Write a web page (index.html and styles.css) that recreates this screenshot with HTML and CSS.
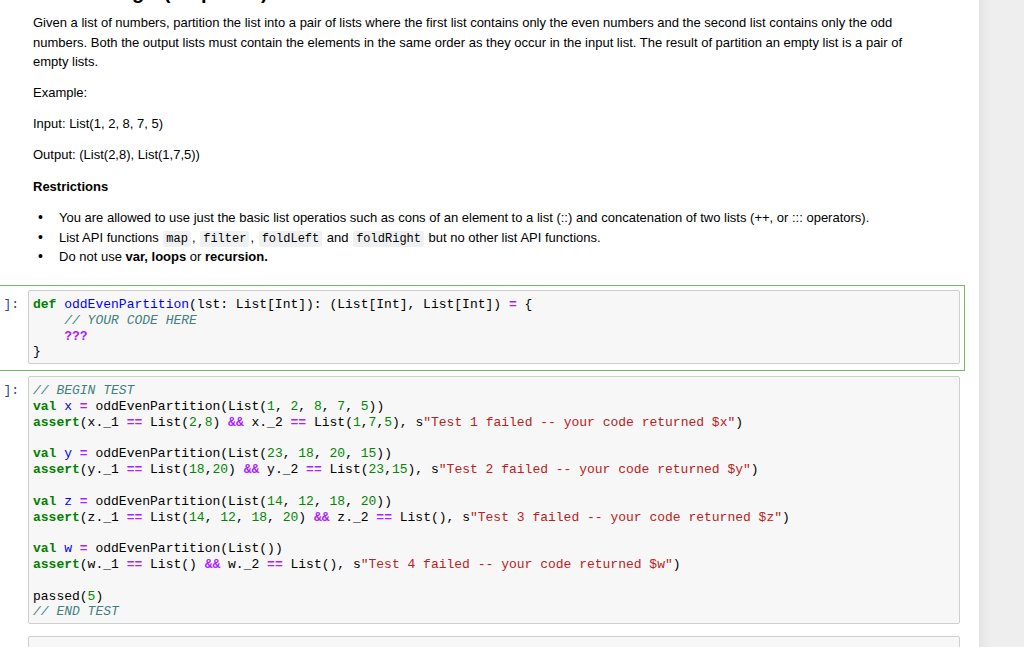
FILE: index.html
```html
<!DOCTYPE html>
<html>
<head>
<meta charset="utf-8">
<link rel="stylesheet" href="styles.css">
</head>
<body>
<div class="notebook">
  <h2 class="title">Partitioning (5 points)</h2>
  <div class="md">
    <p>Given a list of numbers, partition the list into a pair of lists where the first list contains only the even numbers and the second list contains only the odd numbers. Both the output lists must contain the elements in the same order as they occur in the input list. The result of partition an empty list is a pair of empty lists.</p>
    <p>Example:</p>
    <p>Input: List(1, 2, 8, 7, 5)</p>
    <p>Output: (List(2,8), List(1,7,5))</p>
    <p class="sub"><strong>Restrictions</strong></p>
    <ul>
      <li>You are allowed to use just the basic list operatios such as cons of an element to a list (::) and concatenation of two lists (++, or ::: operators).</li>
      <li>List API functions <code>map</code>, <code>filter</code>, <code>foldLeft</code> and <code>foldRight</code> but no other list API functions.</li>
      <li>Do not use <strong>var, loops</strong> or <strong>recursion.</strong></li>
    </ul>
  </div>
  <div class="cell selected">
    <div class="prompt">]:</div>
    <div class="input"><pre><span class="kw">def</span> <span class="df">oddEvenPartition</span>(lst: List[Int]): (List[Int], List[Int]) <span class="op">=</span> {
    <span class="cm">// YOUR CODE HERE</span>
    <span class="op">???</span>
}</pre></div>
  </div>
  <div class="cell">
    <div class="prompt">]:</div>
    <div class="input"><pre><span class="cm">// BEGIN TEST</span>
<span class="kw">val</span> <span class="df">x</span> <span class="op">=</span> oddEvenPartition(List(<span class="nm">1</span>, <span class="nm">2</span>, <span class="nm">8</span>, <span class="nm">7</span>, <span class="nm">5</span>))
<span class="kw">assert</span>(x._1 <span class="op">==</span> List(<span class="nm">2</span>,<span class="nm">8</span>) <span class="op">&amp;&amp;</span> x._2 <span class="op">==</span> List(<span class="nm">1</span>,<span class="nm">7</span>,<span class="nm">5</span>), s<span class="st">"Test 1 failed -- your code returned $x"</span>)

<span class="kw">val</span> <span class="df">y</span> <span class="op">=</span> oddEvenPartition(List(<span class="nm">23</span>, <span class="nm">18</span>, <span class="nm">20</span>, <span class="nm">15</span>))
<span class="kw">assert</span>(y._1 <span class="op">==</span> List(<span class="nm">18</span>,<span class="nm">20</span>) <span class="op">&amp;&amp;</span> y._2 <span class="op">==</span> List(<span class="nm">23</span>,<span class="nm">15</span>), s<span class="st">"Test 2 failed -- your code returned $y"</span>)

<span class="kw">val</span> <span class="df">z</span> <span class="op">=</span> oddEvenPartition(List(<span class="nm">14</span>, <span class="nm">12</span>, <span class="nm">18</span>, <span class="nm">20</span>))
<span class="kw">assert</span>(z._1 <span class="op">==</span> List(<span class="nm">14</span>, <span class="nm">12</span>, <span class="nm">18</span>, <span class="nm">20</span>) <span class="op">&amp;&amp;</span> z._2 <span class="op">==</span> List(), s<span class="st">"Test 3 failed -- your code returned $z"</span>)

<span class="kw">val</span> <span class="df">w</span> <span class="op">=</span> oddEvenPartition(List())
<span class="kw">assert</span>(w._1 <span class="op">==</span> List() <span class="op">&amp;&amp;</span> w._2 <span class="op">==</span> List(), s<span class="st">"Test 4 failed -- your code returned $w"</span>)

passed(<span class="nm">5</span>)
<span class="cm">// END TEST</span></pre></div>
  </div>
  <div class="cell">
    <div class="prompt"></div>
    <div class="input empty"></div>
  </div>
</div>
<div class="sidebar"></div>
</body>
</html>
```
FILE: styles.css
```css
html, body {
  margin: 0;
  height: 647px;
  overflow: hidden;
}
body {
  display: flex;
  background: #eeeeee;
  font-family: "Liberation Sans", Arial, sans-serif;
  color: #000;
}
.notebook {
  width: 979px;
  flex: none;
  background: #fff;
  height: 647px;
  overflow: hidden;
}
.sidebar {
  flex: 1;
  background: linear-gradient(to right, #e1e1e1 0, #eaeaea 5px, #eeeeee 12px);
}
.title {
  font-size: 20px;
  line-height: 25px;
  font-weight: bold;
  margin: -20px 0 8px 33px;
  white-space: nowrap;
  word-spacing: 14px;
}
.md {
  width: 892px;
  padding-left: 33px;
  font-size: 13px;
  line-height: 19.5px;
}
.md p {
  margin: 0 0 11.5px;
}
.md p.sub {
  padding-top: 1px;
}
.md ul {
  margin: 0 0 18.5px;
  padding-left: 26px;
  list-style: none;
}
.md li {
  position: relative;
}
.md li::before {
  content: "\2022";
  position: absolute;
  left: -21px;
  top: 0;
  font-size: 14px;
}
.md code {
  font-family: "Liberation Mono", monospace;
  font-size: 12px;
  line-height: 1;
  background: #eff0f1;
  padding: 1px 3px;
  margin: 0 1px;
  border-radius: 2px;
}
.cell {
  display: flex;
  margin-left: -20px;
  width: 985px;
  box-sizing: border-box;
  border: 1px solid transparent;
  padding: 4px 4px 6px 0;
}
.cell.selected {
  border-color: #76b66b;
}
.prompt {
  width: 47px;
  flex: none;
  box-sizing: border-box;
  text-align: right;
  padding: 7px 9px 0 0;
  font-family: "Liberation Mono", monospace;
  font-size: 13px;
  line-height: 15.79px;
  color: #303f9f;
}
.input {
  flex: 1;
  min-width: 0;
  background: #f7f7f7;
  border: 1px solid #cfcfcf;
  border-radius: 2px;
  padding: 6px 4px 3px;
}
.input.empty {
  min-height: 30px;
}
.input pre {
  margin: 0;
  font-family: "Liberation Mono", monospace;
  font-size: 13px;
  line-height: 15.79px;
  color: #000;
}
.kw { color: #008000; font-weight: bold; }
.df { color: #0000ff; }
.op { color: #aa22ff; font-weight: bold; }
.cm { color: #408080; font-style: italic; }
.nm { color: #008800; }
.st { color: #ba2121; }
```
